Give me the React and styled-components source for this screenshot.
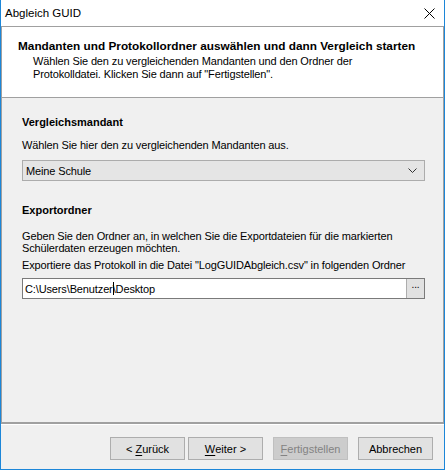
import React from 'react';
import styled, { createGlobalStyle } from 'styled-components';

const GlobalStyle = createGlobalStyle`
  html, body {
    margin: 0;
    padding: 0;
    background: #f0f0f0;
  }
  * {
    box-sizing: border-box;
  }
`;

const font = `"Segoe UI", "Liberation Sans", Arial, sans-serif`;

// Window frame
const Window = styled.div`
  width: 445px;
  height: 470px;
  display: flex;
  flex-direction: column;
  background: #f0f0f0;
  border: 1px solid #1c86d8;
  border-top: none;
  font-family: ${font};
  font-size: 11px;
  letter-spacing: -0.13px;
  color: #000;
`;

const TitleBar = styled.div`
  height: 26px;
  flex: none;
  background: #fff;
  display: flex;
  align-items: center;
  justify-content: space-between;
  padding: 0 0 0 4px;
`;

const Title = styled.span`
  font-size: 11.5px;
  line-height: 14px;
  letter-spacing: 0;
`;

const CloseButton = styled.div`
  width: 30px;
  height: 26px;
  display: flex;
  align-items: center;
  justify-content: center;
`;

// Wizard panel
const Panel = styled.div`
  flex: 1;
  display: flex;
  flex-direction: column;
  border: 1px solid #a0a0a0;
  border-bottom-width: 2px;
`;

const Header = styled.div`
  height: 71px;
  flex: none;
  background: #fff;
  border-bottom: 1px solid #a0a0a0;
  padding: 13px 0 0 16px;
`;

const HeaderTitle = styled.div`
  font-weight: bold;
  font-size: 11.8px;
  letter-spacing: 0;
  line-height: 13px;
`;

const HeaderText = styled.div`
  margin-top: 2px;
  padding-left: 15px;
  line-height: 13px;
`;

const Content = styled.div`
  flex: 1;
  padding: 18px 18px 0 20px;
  display: flex;
  flex-direction: column;
`;

const SectionTitle = styled.div`
  font-weight: bold;
  line-height: 13px;
  letter-spacing: 0;
  margin-top: ${p => p.$top || 0}px;
`;

const Text = styled.div`
  line-height: ${p => p.$lh || 13}px;
  margin-top: ${p => p.$top || 0}px;
`;

const Combo = styled.div`
  margin-top: 8px;
  height: 21px;
  background: #e5e5e5;
  border: 1px solid #acacac;
  display: flex;
  align-items: center;
  justify-content: space-between;
  padding: 0 7px 0 3px;
`;

const PathInput = styled.div`
  margin-top: 6px;
  height: 21px;
  background: #fff;
  border: 1px solid #7a7a7a;
  display: flex;
  align-items: center;
  justify-content: space-between;
  padding: 0 0 0 2px;
`;

const Caret = styled.span`
  display: inline-block;
  width: 1px;
  height: 13px;
  background: #000;
  vertical-align: -2px;
  margin: 0 -1px 0 0;
`;

const BrowseButton = styled.div`
  width: 18px;
  height: 19px;
  background: #e1e1e1;
  border-left: 1px solid #adadad;
  display: flex;
  align-items: flex-start;
  justify-content: center;
  font-size: 10px;
  line-height: 12px;
`;

const Separator = styled.div`
  height: 1px;
  flex: none;
  background: #fff;
`;

// Bottom button bar
const ButtonBar = styled.div`
  height: 44px;
  flex: none;
  display: flex;
  justify-content: flex-end;
  align-items: flex-start;
  padding: 12px 11px 0 0;
`;

const Button = styled.div`
  width: 75px;
  height: 23px;
  margin-left: ${p => p.$gap}px;
  display: flex;
  align-items: center;
  justify-content: center;
  background: ${p => (p.$disabled ? '#cccccc' : '#e1e1e1')};
  border: 1px solid ${p => (p.$disabled ? '#bfbfbf' : '#adadad')};
  color: ${p => (p.$disabled ? '#838383' : '#000')};
  font-size: 11px;
  letter-spacing: 0;

  u {
    text-decoration: underline;
    text-underline-offset: 2px;
  }
`;

function App() {
  return (
    <>
      <GlobalStyle />
      <Window>
        <TitleBar>
          <Title>Abgleich GUID</Title>
          <CloseButton>
            <svg width="11" height="11" viewBox="0 0 11 11">
              <path d="M0.5 0.5 L10.5 10.5 M10.5 0.5 L0.5 10.5" stroke="#000" strokeWidth="1" />
            </svg>
          </CloseButton>
        </TitleBar>
        <Panel>
          <Header>
            <HeaderTitle>Mandanten und Protokollordner auswählen und dann Vergleich starten</HeaderTitle>
            <HeaderText>
              Wählen Sie den zu vergleichenden Mandanten und den Ordner der
              <br />
              Protokolldatei. Klicken Sie dann auf "Fertigstellen".
            </HeaderText>
          </Header>
          <Content>
            <SectionTitle>Vergleichsmandant</SectionTitle>
            <Text $top={10}>Wählen Sie hier den zu vergleichenden Mandanten aus.</Text>
            <Combo>
              <span>Meine Schule</span>
              <svg width="9" height="5" viewBox="0 0 9 5">
                <path d="M0.5 0.5 L4.5 4.5 L8.5 0.5" stroke="#333" strokeWidth="1" fill="none" />
              </svg>
            </Combo>
            <SectionTitle $top={23}>Exportordner</SectionTitle>
            <Text $top={13} $lh={12}>
              Geben Sie den Ordner an, in welchen Sie die Exportdateien für die markierten
              <br />
              Schülerdaten erzeugen möchten.
            </Text>
            <Text $top={5}>Exportiere das Protokoll in die Datei "LogGUIDAbgleich.csv" in folgenden Ordner</Text>
            <PathInput>
              <span>
                C:\Users\Benutzer<Caret />\Desktop
              </span>
              <BrowseButton>...</BrowseButton>
            </PathInput>
          </Content>
        </Panel>
        <Separator />
        <ButtonBar>
          <Button $gap={0}>&lt;&nbsp;<u>Z</u>urück</Button>
          <Button $gap={3}><u>W</u>eiter &gt;</Button>
          <Button $gap={10} $disabled><u>F</u>ertigstellen</Button>
          <Button $gap={10}>Abbrechen</Button>
        </ButtonBar>
      </Window>
    </>
  );
}

export default App;
